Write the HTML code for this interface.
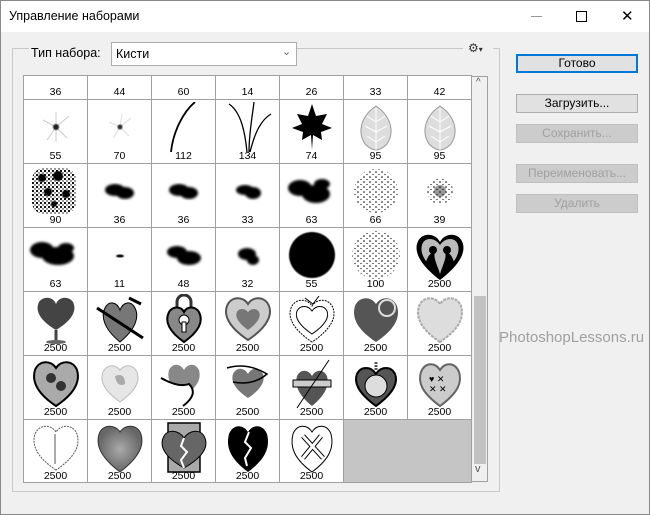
<!DOCTYPE html>
<html><head><meta charset="utf-8"><style>
*{margin:0;padding:0;box-sizing:border-box}
body{width:650px;height:515px;background:#f0f0f0;font-family:"Liberation Sans",sans-serif;font-size:12px;color:#000;position:relative;overflow:hidden}
.win{position:absolute;left:0;top:0;width:650px;height:515px;border:1px solid #888;background:#f0f0f0}
.title{position:absolute;left:0;top:0;width:648px;height:31px;background:#fff}
.title span{position:absolute;left:8px;top:8px;font-size:12.5px}
.abs{position:absolute}
.btn{position:absolute;left:515px;width:122px;height:19px;border:1px solid #adadad;background:#e1e1e1;text-align:center;font-size:12px;line-height:17px}
.dis{color:#a0a0a0;border-color:#bfbfbf;background:#ccc}
.grid{position:absolute;left:22px;top:74px;width:449px;height:408px;background:#fff;border:1px solid #a0a0a0;overflow:hidden}
.c{position:absolute;width:64px;height:64px;border-right:1px solid #a0a0a0;border-bottom:1px solid #a0a0a0;background:#fff}
.c svg{position:absolute;left:7px;top:2px}
.c b{position:absolute;left:0;right:0;bottom:1px;text-align:center;font-weight:normal;font-size:10.5px}
</style></head><body>
<svg width="0" height="0" style="position:absolute"><defs>
<filter id="bl"><feGaussianBlur stdDeviation="1.2"/></filter>
<filter id="bl2"><feGaussianBlur stdDeviation="0.6"/></filter>
<pattern id="dots" width="6" height="5" patternUnits="userSpaceOnUse"><circle cx="1" cy="1" r="0.8" fill="#000"/><circle cx="4" cy="3.5" r="0.6" fill="#000"/></pattern>
<pattern id="dots2" width="4" height="4" patternUnits="userSpaceOnUse"><circle cx="1" cy="1" r="1.1" fill="#000"/><circle cx="3" cy="3" r="0.7" fill="#000"/></pattern>
</defs></svg>
<div class="win">
<div class="title"><span>Управление наборами</span>
<div class="abs" style="left:530px;top:15px;width:11px;height:1px;background:#999"></div>
<div class="abs" style="left:575px;top:10px;width:11px;height:11px;border:1px solid #000"></div>
<div class="abs" style="left:620px;top:6px;font-size:15px;font-weight:normal">✕</div>
</div>
<div class="abs" style="left:11px;top:47px;width:488px;height:444px;border:1px solid #c8c8c8"></div>
<div class="abs" style="left:28px;top:40px;width:260px;height:20px;background:#f0f0f0"></div>
<div class="abs" style="left:30px;top:45px;font-size:12.5px">Тип набора:</div>
<div class="abs" style="left:110px;top:41px;height:24px;border:1px solid #adadad;background:#fff;width:186px"><span class="abs" style="left:4px;top:4px;font-size:12.5px">Кисти</span><span class="abs" style="left:170px;top:2px;color:#666;font-size:11px">⌄</span></div>
<div class="abs" style="left:462px;top:40px;width:30px;height:14px;background:#f0f0f0"></div>
<div class="abs" style="left:467px;top:40px;font-size:12px;color:#333">⚙<span style="font-size:8px">▾</span></div>

<div class="grid">
<div class="c" style="left:0;top:-40px"><b>36</b></div>
<div class="c" style="left:64px;top:-40px"><b>44</b></div>
<div class="c" style="left:128px;top:-40px"><b>60</b></div>
<div class="c" style="left:192px;top:-40px"><b>14</b></div>
<div class="c" style="left:256px;top:-40px"><b>26</b></div>
<div class="c" style="left:320px;top:-40px"><b>33</b></div>
<div class="c" style="left:384px;top:-40px"><b>42</b></div>
<div class="c" style="left:0;top:24px"><svg width="50" height="50"><g stroke="#ccc" stroke-width="1"><path d="M25 25L12 18M25 25L38 14M25 25L16 38M25 25L36 36M25 25L25 10M25 25L25 40"/></g><circle cx="25" cy="25" r="3" fill="#222" filter="url(#bl2)"/></svg><b>55</b></div>
<div class="c" style="left:64px;top:24px"><svg width="50" height="50"><g stroke="#ddd"><path d="M25 25L14 20M25 25L36 16M25 25L18 36M25 25L34 34M25 25L27 12"/></g><circle cx="25" cy="25" r="2.5" fill="#333" filter="url(#bl2)"/></svg><b>70</b></div>
<div class="c" style="left:128px;top:24px"><svg width="50" height="50"><path d="M12 50C14 30 24 10 36 0" stroke="#000" stroke-width="1.8" fill="none"/></svg><b>112</b></div>
<div class="c" style="left:192px;top:24px"><svg width="50" height="50"><g stroke="#000" stroke-width="1.3" fill="none"><path d="M24 50C22 30 18 10 6 2M26 50C26 30 30 10 31 0M27 50C32 30 38 18 48 12"/></g></svg><b>134</b></div>
<div class="c" style="left:256px;top:24px"><svg width="50" height="50"><path d="M25 2L29 14L40 12L35 22L45 26L34 30L35 38L26 33L25 48L24 33L15 38L16 30L5 26L15 22L10 12L21 14Z" fill="#000"/></svg><b>74</b></div>
<div class="c" style="left:320px;top:24px"><svg width="50" height="50"><path d="M25 4C10 14 6 30 14 42Q20 48 25 48Q30 48 36 42C44 30 40 14 25 4Z" fill="#ddd" stroke="#999"/><path d="M25 6V48M25 20L16 14M25 20L34 14M25 30L14 24M25 30L36 24M25 40L16 34M25 40L34 34" stroke="#fff"/></svg><b>95</b></div>
<div class="c" style="left:384px;top:24px"><svg width="50" height="50"><path d="M25 4C10 14 6 30 14 42Q20 48 25 48Q30 48 36 42C44 30 40 14 25 4Z" fill="#ddd" stroke="#999"/><path d="M25 6V48M25 20L16 14M25 20L34 14M25 30L14 24M25 30L36 24M25 40L16 34M25 40L34 34" stroke="#fff"/></svg><b>95</b></div>
<div class="c" style="left:0;top:88px"><svg width="54" height="52" style="left:4px"><rect x="4" y="2" width="44" height="46" rx="12" fill="url(#dots2)"/><g filter="url(#bl2)" fill="#000"><circle cx="14" cy="12" r="4"/><circle cx="30" cy="10" r="5"/><circle cx="20" cy="26" r="4"/><circle cx="38" cy="28" r="4"/><circle cx="26" cy="38" r="3"/></g></svg><b>90</b></div>
<div class="c" style="left:64px;top:88px"><svg width="50" height="50"><g filter="url(#bl)" fill="#000"><ellipse cx="20" cy="24" rx="10" ry="6"/><ellipse cx="30" cy="27" rx="9" ry="6"/></g></svg><b>36</b></div>
<div class="c" style="left:128px;top:88px"><svg width="50" height="50"><g filter="url(#bl)" fill="#000"><ellipse cx="20" cy="24" rx="10" ry="6"/><ellipse cx="30" cy="27" rx="9" ry="6"/></g></svg><b>36</b></div>
<div class="c" style="left:192px;top:88px"><svg width="50" height="50"><g filter="url(#bl)" fill="#000"><ellipse cx="22" cy="24" rx="9" ry="5"/><ellipse cx="30" cy="27" rx="8" ry="6"/></g></svg><b>33</b></div>
<div class="c" style="left:256px;top:88px"><svg width="54" height="50" style="left:4px"><g filter="url(#bl)" fill="#000"><ellipse cx="16" cy="22" rx="12" ry="8"/><ellipse cx="32" cy="28" rx="14" ry="9"/><ellipse cx="38" cy="18" rx="8" ry="5"/></g></svg><b>63</b></div>
<div class="c" style="left:320px;top:88px"><svg width="50" height="50"><circle cx="25" cy="25" r="22" fill="url(#dots)"/></svg><b>66</b></div>
<div class="c" style="left:384px;top:88px"><svg width="50" height="50"><circle cx="25" cy="25" r="13" fill="url(#dots)"/><circle cx="25" cy="25" r="6" fill="#000" opacity=".4"/></svg><b>39</b></div>
<div class="c" style="left:0;top:152px"><svg width="56" height="50" style="left:2px"><g filter="url(#bl)" fill="#000"><ellipse cx="16" cy="20" rx="12" ry="8"/><ellipse cx="32" cy="26" rx="16" ry="9"/><ellipse cx="40" cy="18" rx="8" ry="5"/></g></svg><b>63</b></div>
<div class="c" style="left:64px;top:152px"><svg width="50" height="50"><ellipse cx="25" cy="26" rx="4" ry="1.5" fill="#000" filter="url(#bl2)"/></svg><b>11</b></div>
<div class="c" style="left:128px;top:152px"><svg width="50" height="50"><g filter="url(#bl)" fill="#000"><ellipse cx="18" cy="22" rx="10" ry="6"/><ellipse cx="30" cy="28" rx="12" ry="7"/></g></svg><b>48</b></div>
<div class="c" style="left:192px;top:152px"><svg width="50" height="50"><g filter="url(#bl)" fill="#000"><ellipse cx="24" cy="24" rx="9" ry="6"/><ellipse cx="30" cy="30" rx="6" ry="5"/></g></svg><b>32</b></div>
<div class="c" style="left:256px;top:152px"><svg width="50" height="50"><circle cx="25" cy="25" r="23" fill="#000" filter="url(#bl2)"/></svg><b>55</b></div>
<div class="c" style="left:320px;top:152px"><svg width="50" height="50"><circle cx="25" cy="25" r="24" fill="url(#dots)"/></svg><b>100</b></div>
<div class="c" style="left:384px;top:152px"><svg width="50" height="52"><path d="M25 50C4 34 0 22 2 14C5 2 20 2 25 12C30 2 45 2 48 14C50 22 46 34 25 50Z" fill="#000"/><path d="M25 44C8 32 5 22 7 15C9 7 20 7 25 15C30 7 41 7 43 15C45 22 42 32 25 44Z" fill="#bbb"/><path d="M10 36C12 26 16 22 20 22C18 28 22 34 25 44ZM40 36C38 26 34 22 30 22C32 28 28 34 25 44Z" fill="#000"/><circle cx="18" cy="20" r="4" fill="#000"/><circle cx="32" cy="20" r="4" fill="#000"/></svg><b>2500</b></div>
<div class="c" style="left:0;top:216px"><svg width="50" height="52"><path d="M25 36C8 26 4 16 8 8C12 2 22 2 25 10C28 2 38 2 42 8C46 16 42 26 25 36Z" fill="#444"/><path d="M25 36V46" stroke="#444" stroke-width="3"/><ellipse cx="25" cy="48" rx="10" ry="2" fill="#666"/></svg><b>2500</b></div>
<div class="c" style="left:64px;top:216px"><svg width="50" height="52"><path d="M25 48C8 34 6 22 10 14C14 6 22 8 25 16C28 8 36 6 40 14C44 22 42 34 25 48Z" fill="#777" stroke="#000"/><path d="M2 14L48 44" stroke="#000" stroke-width="3"/><path d="M34 4L46 10" stroke="#000" stroke-width="3"/></svg><b>2500</b></div>
<div class="c" style="left:128px;top:216px"><svg width="50" height="52"><path d="M18 16V8A7 7 0 0 1 32 8V16" stroke="#333" stroke-width="3" fill="none"/><path d="M25 48C8 36 6 26 10 18C14 12 22 12 25 18C28 12 36 12 40 18C44 26 42 36 25 48Z" fill="#888" stroke="#000" stroke-width="2"/><circle cx="25" cy="26" r="5" fill="#fff" stroke="#000"/><rect x="23" y="28" width="4" height="10" fill="#fff" stroke="#000"/></svg><b>2500</b></div>
<div class="c" style="left:192px;top:216px"><svg width="50" height="52"><path d="M25 46C4 32 1 20 4 12C8 2 20 2 25 10C30 2 42 2 46 12C49 20 46 32 25 46Z" fill="#ccc" stroke="#555" stroke-width="2"/><path d="M25 36C14 28 12 22 14 18C16 14 22 14 25 18C28 14 34 14 36 18C38 22 36 28 25 36Z" fill="#777"/></svg><b>2500</b></div>
<div class="c" style="left:256px;top:216px"><svg width="50" height="52"><path d="M25 48C4 34 1 22 4 14C8 4 20 4 25 12C30 4 42 4 46 14C49 22 46 34 25 48Z" fill="#fff" stroke="#000" stroke-dasharray="2 1"/><path d="M25 40C10 30 8 22 10 17C13 11 21 11 25 17C29 11 37 11 40 17C42 22 40 30 25 40Z" fill="#fff" stroke="#000"/><path d="M18 4L26 10L32 2" stroke="#000" fill="none"/></svg><b>2500</b></div>
<div class="c" style="left:320px;top:216px"><svg width="50" height="52"><path d="M25 48C4 34 1 22 4 12C8 2 20 2 25 10C30 2 42 2 46 12C49 22 46 34 25 48Z" fill="#555"/><circle cx="36" cy="14" r="8" fill="none" stroke="#ddd" stroke-width="2"/></svg><b>2500</b></div>
<div class="c" style="left:384px;top:216px"><svg width="50" height="52"><path d="M25 48C4 34 1 22 4 12C8 2 20 2 25 10C30 2 42 2 46 12C49 22 46 34 25 48Z" fill="#ddd" stroke="#aaa" stroke-width="2" stroke-dasharray="3 1"/></svg><b>2500</b></div>
<div class="c" style="left:0;top:280px"><svg width="50" height="52"><path d="M25 48C4 34 1 22 4 12C8 2 20 2 25 10C30 2 42 2 46 12C49 22 46 34 25 48Z" fill="#aaa" stroke="#000" stroke-width="2"/><circle cx="20" cy="20" r="5" fill="#333"/><circle cx="30" cy="28" r="5" fill="#333"/></svg><b>2500</b></div>
<div class="c" style="left:64px;top:280px"><svg width="50" height="52"><path d="M25 44C8 32 5 22 8 14C12 6 20 6 25 12C30 6 38 6 42 14C45 22 42 32 25 44Z" fill="#e6e6e6" stroke="#bbb"/><path d="M20 18Q30 14 30 26Q22 30 20 18Z" fill="#aaa"/></svg><b>2500</b></div>
<div class="c" style="left:128px;top:280px"><svg width="50" height="52"><path d="M25 38C10 28 8 20 10 12C14 4 22 6 25 12C28 6 36 4 40 12C42 20 40 28 25 38Z" fill="#888"/><path d="M2 20Q20 30 30 26Q40 36 24 48" stroke="#000" stroke-width="2" fill="#fff"/></svg><b>2500</b></div>
<div class="c" style="left:192px;top:280px"><svg width="50" height="52"><path d="M25 40C10 30 8 22 10 16C14 8 22 10 25 16C28 10 36 8 40 16C42 22 40 30 25 40Z" fill="#777"/><path d="M4 10Q24 4 44 16Q30 28 10 24" stroke="#000" stroke-width="1.5" fill="none"/></svg><b>2500</b></div>
<div class="c" style="left:256px;top:280px"><svg width="50" height="52"><path d="M25 48C10 36 8 26 10 18C14 10 22 12 25 18C28 12 36 10 40 18C42 26 40 36 25 48Z" fill="#555"/><rect x="6" y="22" width="38" height="7" fill="#ccc" stroke="#000"/><path d="M42 2L10 50" stroke="#000"/></svg><b>2500</b></div>
<div class="c" style="left:320px;top:280px"><svg width="50" height="52"><path d="M25 48C6 34 3 24 6 16C10 8 20 8 25 16C30 8 40 8 44 16C47 24 44 34 25 48Z" fill="#555" stroke="#000" stroke-width="2"/><circle cx="25" cy="28" r="11" fill="#ddd" stroke="#000"/><path d="M25 4V12" stroke="#555" stroke-width="3" stroke-dasharray="2 1"/></svg><b>2500</b></div>
<div class="c" style="left:384px;top:280px"><svg width="50" height="52"><path d="M25 48C6 34 3 24 6 14C10 4 20 4 25 12C30 4 40 4 44 14C47 24 44 34 25 48Z" fill="#ccc" stroke="#666" stroke-width="2"/><text x="14" y="24" font-size="9" font-family="Liberation Sans">♥ ✕</text><text x="14" y="34" font-size="9" font-family="Liberation Sans">✕ ✕</text></svg><b>2500</b></div>
<div class="c" style="left:0;top:344px"><svg width="50" height="52"><path d="M25 48C4 34 1 22 4 12C8 2 20 2 25 10C30 2 42 2 46 12C49 22 46 34 25 48Z" fill="#fff" stroke="#555" stroke-dasharray="2 1"/><path d="M24 12V42" stroke="#555"/></svg><b>2500</b></div>
<div class="c" style="left:64px;top:344px"><svg width="50" height="52"><defs><radialGradient id="rg"><stop offset="0" stop-color="#aaa"/><stop offset="1" stop-color="#666"/></radialGradient></defs><path d="M25 50C4 34 1 22 4 12C8 2 20 2 25 10C30 2 42 2 46 12C49 22 46 34 25 50Z" fill="url(#rg)" stroke="#333"/></svg><b>2500</b></div>
<div class="c" style="left:128px;top:344px"><svg width="50" height="52"><rect x="2" y="1" width="32" height="49" fill="#aaa" stroke="#000" stroke-width="1.5" transform="translate(7 0)"/><path d="M25 46C4 34 1 24 4 16C8 6 20 8 25 16C30 8 42 6 46 16C49 24 46 34 25 46Z" fill="#666" stroke="#000"/><path d="M25 16L22 24L28 30L22 38L25 46" stroke="#fff" stroke-width="2" fill="none"/></svg><b>2500</b></div>
<div class="c" style="left:192px;top:344px"><svg width="50" height="52"><path d="M25 50C6 36 3 24 6 12C10 2 20 2 25 10C30 2 40 2 44 12C47 24 44 36 25 50Z" fill="#000"/><path d="M26 10L22 20L28 26L22 36L24 44" stroke="#fff" stroke-width="2" fill="none"/></svg><b>2500</b></div>
<div class="c" style="left:256px;top:344px"><svg width="50" height="52"><path d="M25 50C6 36 3 24 6 12C10 2 20 2 25 10C30 2 40 2 44 12C47 24 44 36 25 50Z" fill="#fff" stroke="#000"/><path d="M16 14L36 36M34 14L16 36" stroke="#000" stroke-width="5"/><path d="M16 14L36 36M34 14L16 36" stroke="#fff" stroke-width="3"/></svg><b>2500</b></div>
<div class="abs" style="left:320px;top:344px;width:129px;height:64px;background:#c5c5c5"></div>
</div>
<div class="abs" style="left:471px;top:75px;width:16px;height:406px;background:#f0f0f0;border-right:1px solid #a0a0a0;border-top:1px solid #a0a0a0;border-bottom:1px solid #a0a0a0"></div>
<div class="abs" style="left:473px;top:295px;width:12px;height:168px;background:#c2c2c2"></div>
<div class="abs" style="left:475px;top:76px;font-size:10px;color:#555">^</div>
<div class="abs" style="left:474px;top:462px;font-size:11px;color:#555">v</div>

<div class="btn" style="top:53px;border:2px solid #0078d7;line-height:15px">Готово</div>
<div class="btn" style="top:93px">Загрузить...</div>
<div class="btn dis" style="top:123px">Сохранить...</div>
<div class="btn dis" style="top:163px">Переименовать...</div>
<div class="btn dis" style="top:193px">Удалить</div>
<div class="abs" style="left:498px;top:328px;font-size:15px;color:#a0a0a0">PhotoshopLessons.ru</div>
</div>
</body></html>
